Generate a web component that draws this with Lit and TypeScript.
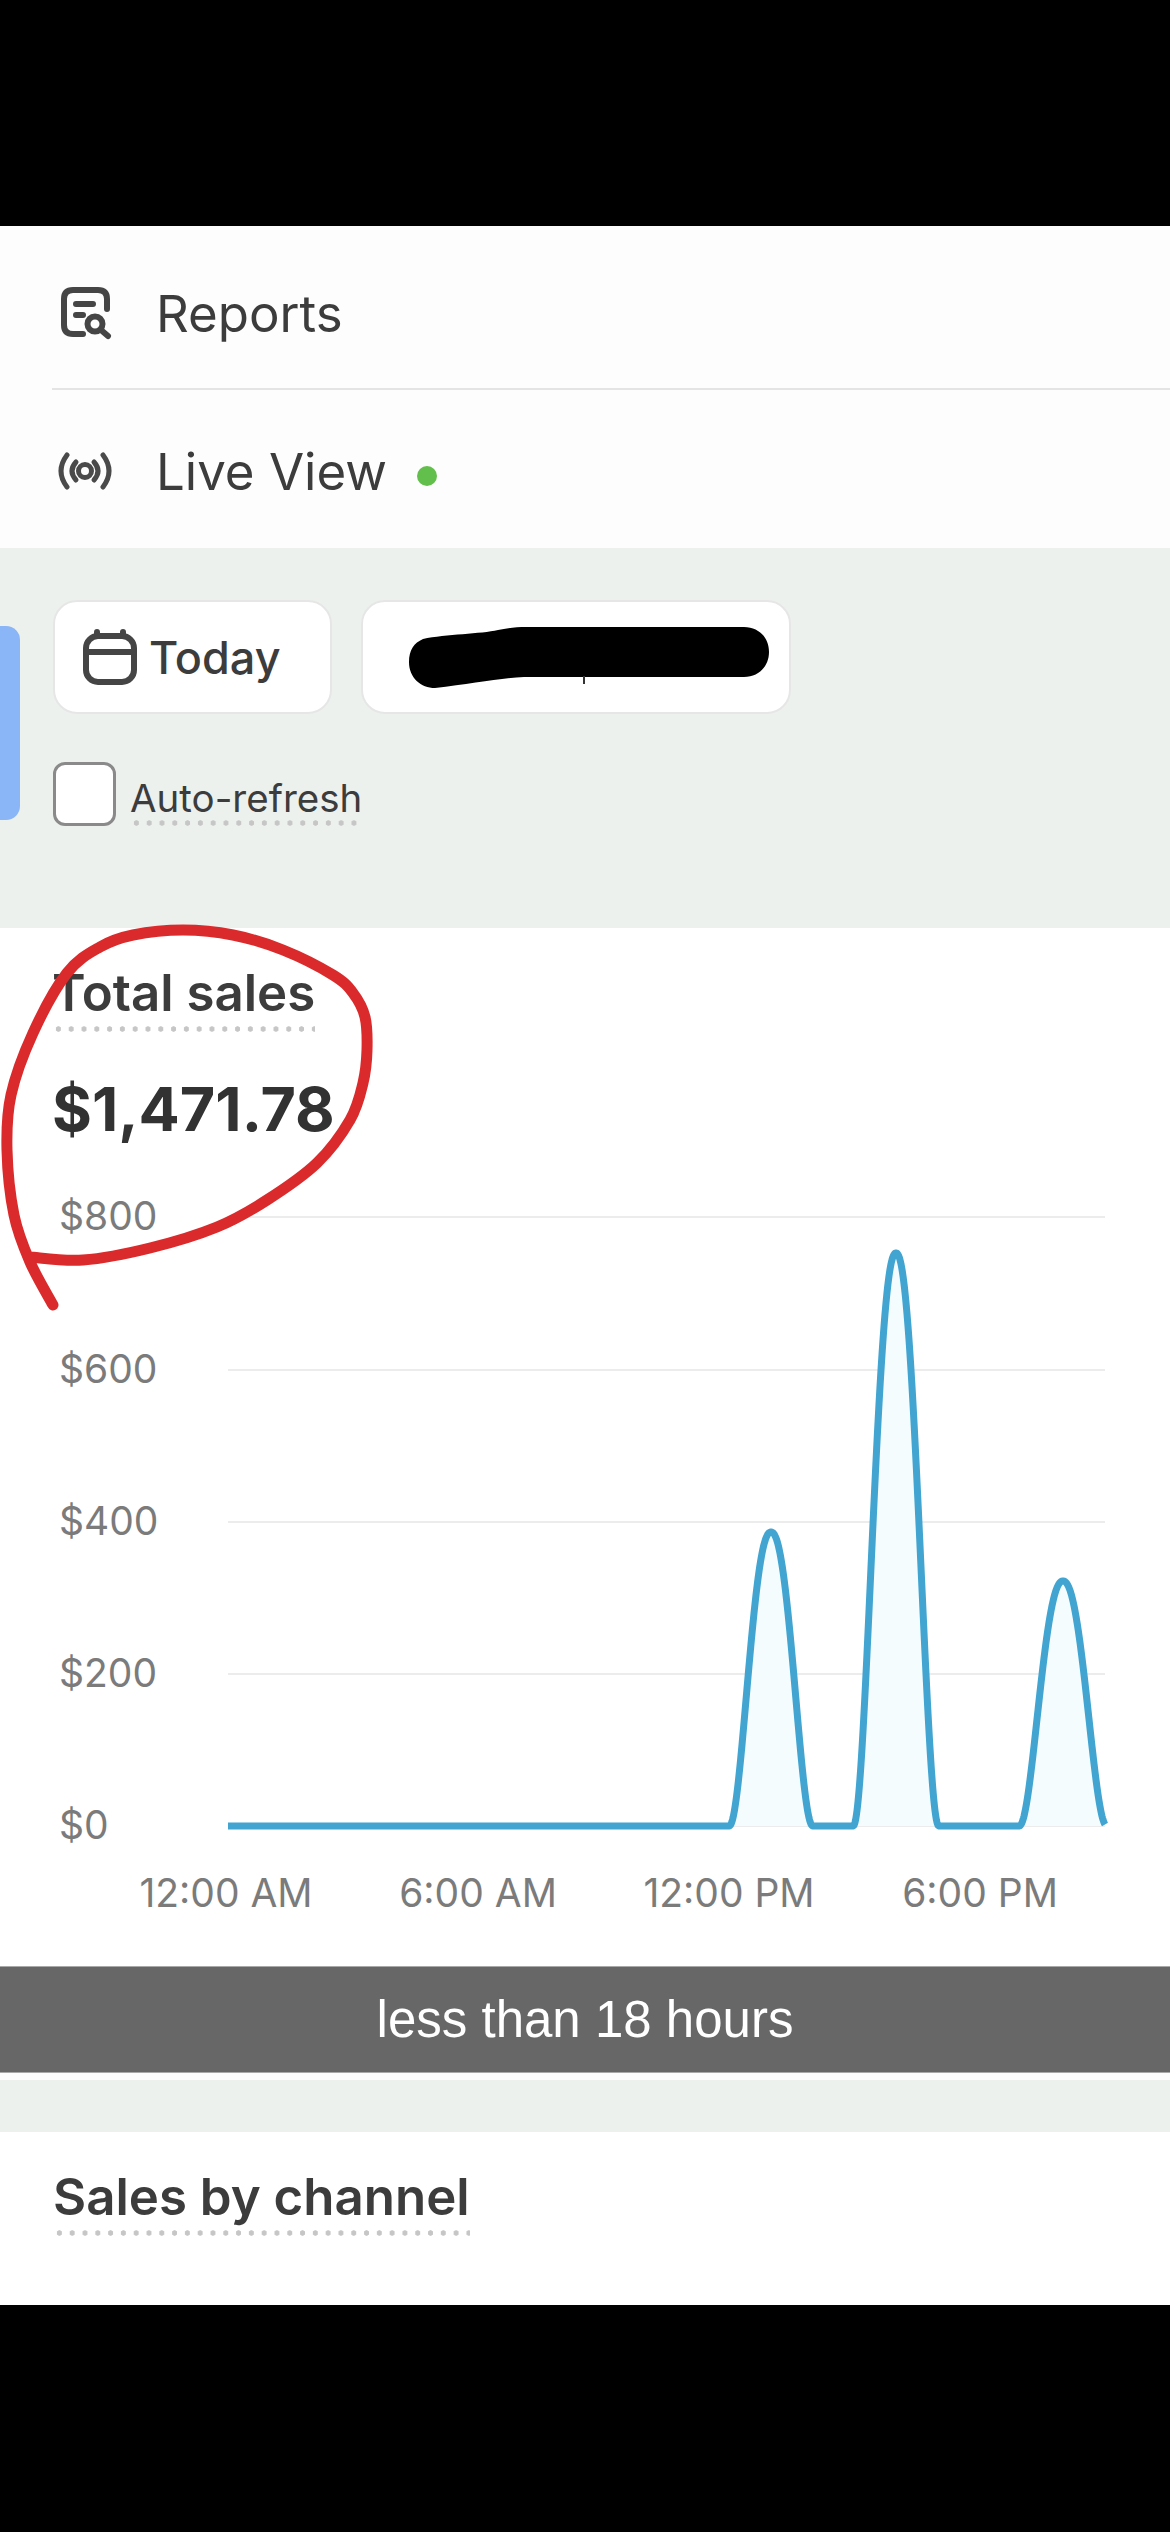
import { LitElement, css, html, svg } from 'lit';
import { customElement } from 'lit/decorators.js';

const GRID_Y = [1217, 1370, 1522, 1674, 1826];
const Y_LABELS = ['$800', '$600', '$400', '$200', '$0'];
const X_LABELS = [
  { x: 226, text: '12:00 AM' },
  { x: 478, text: '6:00 AM' },
  { x: 729, text: '12:00 PM' },
  { x: 980, text: '6:00 PM' },
];
const BASE_Y = 1826;
const PEAKS = [
  { x: 771, half: 42, top: 1532 },
  { x: 896, half: 43, top: 1253 },
  { x: 1063, half: 44, top: 1581 },
];

// page coordinates of the hand drawn red ring
const RING: [number, number][] = [
  [53, 1305], [30, 1262], [14, 1215], [7, 1150], [11, 1095], [33, 1033], [67, 973], [100, 947],
  [133, 935], [183, 930], [233, 935], [283, 950], [333, 975], [353, 993], [365, 1017], [367, 1050],
  [363, 1083], [350, 1120], [317, 1163], [267, 1200], [217, 1227], [150, 1248], [83, 1260], [30, 1257],
];

function smoothPath(pts: [number, number][]) {
  let d = `M${pts[0][0]},${pts[0][1]}`;
  for (let i = 0; i < pts.length - 1; i++) {
    const p0 = pts[Math.max(i - 1, 0)];
    const p1 = pts[i];
    const p2 = pts[i + 1];
    const p3 = pts[Math.min(i + 2, pts.length - 1)];
    const c1x = p1[0] + (p2[0] - p0[0]) / 6;
    const c1y = p1[1] + (p2[1] - p0[1]) / 6;
    const c2x = p2[0] - (p3[0] - p1[0]) / 6;
    const c2y = p2[1] - (p3[1] - p1[1]) / 6;
    d += ` C${c1x.toFixed(1)},${c1y.toFixed(1)} ${c2x.toFixed(1)},${c2y.toFixed(1)} ${p2[0]},${p2[1]}`;
  }
  return d;
}

function salesY(x: number) {
  for (const p of PEAKS) {
    const t = Math.abs(x - p.x) / p.half;
    if (t < 1) return BASE_Y - (BASE_Y - p.top) * Math.pow(1 - Math.pow(t, 2.2), 2.2);
  }
  return BASE_Y;
}

function salesLine() {
  const parts: string[] = [];
  for (let x = 228; x <= 1105; x += 0.5) parts.push(`${x},${salesY(x).toFixed(1)}`);
  return parts.join(' ');
}

@customElement('app-root')
export class AppRoot extends LitElement {
  private renderNav() {
    return html`
      <nav class="nav">
        <div class="nav-row first">
          <svg class="nav-icon" viewBox="52 280 70 64" fill="none" stroke="#454545" stroke-width="6" stroke-linecap="round" stroke-linejoin="round">
            <path d="M107,308 V298 Q107,289 98,289 H73 Q64,289 64,298 V324 Q64,333 73,333 H83" />
            <path d="M76,303 H93 M76,314 H83" />
            <circle cx="95" cy="323" r="7.5" />
            <path d="M101,329 L108,335" />
          </svg>
          <span>Reports</span>
        </div>
        <div class="nav-row live">
          <svg class="nav-icon" viewBox="52 437 70 64" fill="none" stroke="#4a4a4a" stroke-width="5" stroke-linecap="round">
            <circle cx="85" cy="469" r="6.5" />
            <path d="M76,460 Q68,469 76,478 M94,460 Q102,469 94,478" />
            <path d="M67,453 Q55,469 67,485 M103,453 Q115,469 103,485" />
          </svg>
          <span>Live View</span>
          <i class="live-dot"></i>
        </div>
      </nav>
    `;
  }

  private renderFilters() {
    return html`
      <section class="filters">
        <div class="side-tab"></div>
        <div class="filter-row">
          <div class="pill today">
            <svg class="cal" viewBox="0 0 54 56" fill="none" stroke="#454545" stroke-width="6" stroke-linecap="round">
              <rect x="3" y="7" width="48" height="46" rx="12" />
              <path d="M3,23 H51" />
              <path d="M14,3 V7 M40,3 V7" />
            </svg>
            <span>Today</span>
          </div>
          <div class="pill range">
            <svg class="scribble" viewBox="408 625 362 68">
              <path d="M434,690 C420,690 408,680 408,664 C408,652 413,645 422,641 C445,636 480,636 497,632 C505,630 515,629 525,629 H743 C758,629 768,640 768,654 C768,668 758,679 743,679 H523 C500,680 470,686 434,690 Z" fill="#000" />
              <path d="M583,678 V686" stroke="#333" stroke-width="2" />
            </svg>
          </div>
        </div>
        <label class="refresh">
          <span class="box"></span>
          <span class="dotted">Auto-refresh</span>
        </label>
      </section>
    `;
  }

  private renderChart() {
    const line = salesLine();
    return html`
      <svg class="chart" viewBox="0 1190 1170 776">
        ${GRID_Y.map(
          (y, i) => svg`
            <line x1="228" x2="1105" y1=${y} y2=${y} stroke="#ececec" stroke-width="2" />
            <text x="59" y=${y + 13} class="tick">${Y_LABELS[i]}</text>
          `
        )}
        <polygon points="228,${BASE_Y} ${line} 1105,${BASE_Y}" fill="#f5fcfd" />
        <polyline points=${line} fill="none" stroke="#41a4d1" stroke-width="7" stroke-linejoin="round" />
        ${X_LABELS.map(
          (l) => svg`<text x=${l.x} y="1907" text-anchor="middle" class="tick">${l.text}</text>`
        )}
      </svg>
    `;
  }

  render() {
    return html`
      <div class="black top"></div>
      ${this.renderNav()} ${this.renderFilters()}
      <section class="sales">
        <div class="metric">
          <span class="dotted title">Total sales</span>
          <div class="amount">$1,471.78</div>
        </div>
        ${this.renderChart()}
        <svg class="ring" viewBox="0 928 400 400">
          <path d=${smoothPath(RING)} fill="none" stroke="#db2a2b" stroke-width="11" stroke-linecap="round" stroke-linejoin="round" />
        </svg>
      </section>
      <div class="caption">less than 18 hours</div>
      <div class="gap"></div>
      <section class="channel">
        <span class="dotted title">Sales by channel</span>
      </section>
      <div class="black bottom"></div>
    `;
  }

  static styles = css`
    :host {
      display: block;
      width: 1170px;
      height: 2532px;
      overflow: hidden;
      background: #000;
      font-family: Inter, 'Liberation Sans', sans-serif;
      color: #3c3c3c;
    }

    .black {
      background: #000;
    }

    .top {
      height: 226px;
    }

    .bottom {
      height: 227px;
    }

    .nav {
      display: flex;
      flex-direction: column;
      height: 322px;
      padding-left: 52px;
      box-sizing: border-box;
      background: #fdfdfd;
      font-size: 51px;
    }

    .nav-row {
      display: flex;
      align-items: center;
      gap: 34px;
      height: 164px;
      box-sizing: border-box;
      border-bottom: 2px solid #e4e4e4;
    }

    .nav-row.first {
      padding-top: 12px;
    }

    .nav-row.live {
      height: 158px;
      padding-top: 4px;
      border-bottom: 0;
    }

    .nav-icon {
      width: 70px;
      height: 64px;
      flex: none;
    }

    .live-dot {
      width: 20px;
      height: 20px;
      margin-left: -4px;
      margin-top: 10px;
      border-radius: 50%;
      background: #63bf4b;
    }

    .filters {
      position: relative;
      height: 380px;
      box-sizing: border-box;
      padding: 52px 0 0 53px;
      background: #edf1ee;
    }

    .side-tab {
      position: absolute;
      left: 0;
      top: 78px;
      width: 20px;
      height: 194px;
      border-radius: 0 14px 14px 0;
      background: #8ab5f6;
    }

    .filter-row {
      display: flex;
      gap: 29px;
    }

    .pill {
      display: flex;
      align-items: center;
      height: 114px;
      box-sizing: border-box;
      border: 2px solid #e6e6e6;
      border-radius: 24px;
      background: #fff;
    }

    .today {
      width: 279px;
      gap: 12px;
      padding-left: 28px;
      font-size: 45px;
      font-weight: 500;
    }

    .cal {
      width: 54px;
      height: 56px;
      flex: none;
    }

    .range {
      width: 430px;
      padding-left: 46px;
    }

    .scribble {
      width: 362px;
      height: 68px;
    }

    .refresh {
      display: flex;
      align-items: flex-end;
      gap: 14px;
      margin-top: 48px;
      font-size: 38.5px;
    }

    .box {
      width: 63px;
      height: 64px;
      box-sizing: border-box;
      border: 3px solid #8a8a8a;
      border-radius: 12px;
      background: #fff;
    }

    .dotted {
      display: inline-block;
      padding-bottom: 12px;
      background: radial-gradient(circle, #c6c6c6 2.4px, transparent 3px) left bottom / 12.8px 6px repeat-x;
    }

    .refresh .dotted {
      padding-bottom: 5px;
    }

    .sales {
      position: relative;
      height: 1038px;
      background: #fff;
    }

    .metric {
      height: 262px;
      box-sizing: border-box;
      padding: 34px 0 0 52px;
    }

    .title {
      font-size: 51px;
      font-weight: 600;
      padding-bottom: 9px;
    }

    .amount {
      margin-top: 39px;
      font-size: 61px;
      font-weight: 700;
      line-height: 76px;
      color: #323232;
    }

    .chart {
      display: block;
      width: 1170px;
      height: 776px;
    }

    .tick {
      font-family: Inter, 'Liberation Sans', sans-serif;
      font-size: 39px;
      fill: #7b7b7b;
    }

    .ring {
      position: absolute;
      left: 0;
      top: 0;
      width: 400px;
      height: 400px;
      overflow: visible;
    }

    .caption {
      height: 107px;
      line-height: 105px;
      text-align: center;
      box-sizing: border-box;
      border-top: 1px solid #a9a9a9;
      border-bottom: 1px solid #a9a9a9;
      background: #676767;
      color: #fff;
      font-family: 'Liberation Sans', Arial, sans-serif;
      font-size: 51px;
    }

    .gap {
      height: 59px;
      box-sizing: border-box;
      border-top: 7px solid #fdfdfd;
      background: #edf1ee;
    }

    .channel {
      height: 173px;
      box-sizing: border-box;
      padding: 34px 0 0 53px;
      background: #fff;
    }
  `;
}

declare global {
  interface HTMLElementTagNameMap {
    'app-root': AppRoot;
  }
}
